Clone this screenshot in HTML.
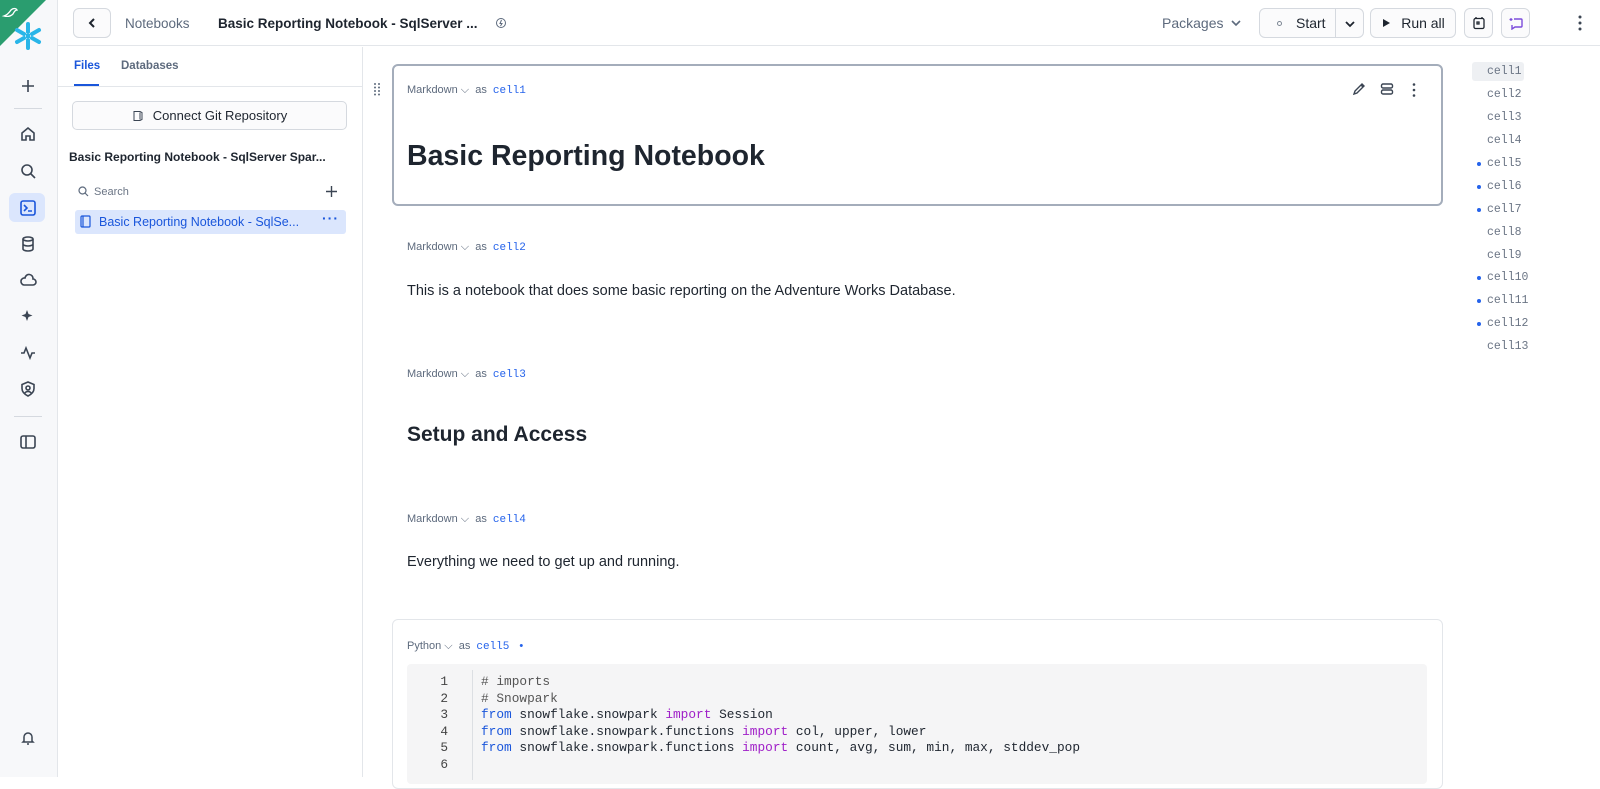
<!DOCTYPE html>
<html><head><meta charset="utf-8"><style>
*{box-sizing:border-box;margin:0;padding:0}
body{width:1600px;height:777px;overflow:hidden;background:#fff;font-family:"Liberation Sans",sans-serif;color:#1e252f;position:relative}
.abs{position:absolute}
.side{left:0;top:0;width:58px;height:777px;background:#f7f8fa;border-right:1px solid #e3e6ea}
.ic{position:absolute;left:18px;width:20px;height:20px}
.top{left:58px;top:0;right:0;height:46px;border-bottom:1px solid #e3e6ea}
.btn{position:absolute;border:1px solid #d5d9df;border-radius:6px;background:#fbfbfc;height:30px;top:8px;font-size:14px;display:flex;align-items:center;justify-content:center}
.lbl{font-size:11px;color:#5d6a7d;position:absolute}
.lbl .c{color:#2563eb;font-family:"Liberation Mono",monospace;margin-left:6px}
.toc{position:absolute;left:1487px;font-family:"Liberation Mono",monospace;font-size:11.5px;color:#6b7585}
.dot{position:absolute;left:1477px;width:4px;height:4px;border-radius:50%;background:#2563eb}
.code{font-family:"Liberation Mono",monospace;font-size:12.8px;line-height:16.5px}
.kw{color:#a020c8}
</style></head><body>
<div class="abs side">
  <svg class="abs" style="left:0;top:0" width="46" height="46"><polygon points="0,0 46,0 0,46" fill="#2a9d6f"/><path d="M4 16c3-1 5-3 7-6 2-2 5-2 6 0-2 0-3 2-4 4-2 2-5 3-9 2z" fill="none" stroke="#fff" stroke-width="1.3"/></svg>
  <svg class="abs" style="left:12px;top:20px" width="32" height="32" viewBox="0 0 32 32" stroke="#29b5e8" stroke-width="4" stroke-linecap="round" fill="none"><path d="M16 4v8M16 20v8M5 10l7 4M20 18l7 4M5 22l7-4M20 14l7-4"/><rect x="14" y="14" width="4" height="4" fill="#29b5e8" stroke="none"/></svg>
  <svg class="ic" style="top:76px" viewBox="0 0 20 20" stroke="#3b4553" stroke-width="1.6" fill="none"><path d="M10 4v12M4 10h12"/></svg>
  <div class="abs" style="left:14px;top:108px;width:28px;height:1px;background:#d5d9df"></div>
  <svg class="ic" style="top:124px" viewBox="0 0 20 20" stroke="#3b4553" stroke-width="1.6" fill="none"><path d="M4 9l6-5 6 5v7H12v-4H8v4H4z"/></svg>
  <svg class="ic" style="top:161px" viewBox="0 0 20 20" stroke="#3b4553" stroke-width="1.6" fill="none"><circle cx="9" cy="9" r="5"/><path d="M13 13l4 4"/></svg>
  <div class="abs" style="left:9px;top:193px;width:36px;height:29px;background:#dbe6fd;border-radius:6px"></div>
  <svg class="ic" style="top:198px" viewBox="0 0 20 20" stroke="#1a56db" stroke-width="1.6" fill="none"><rect x="3" y="3" width="14" height="14" rx="2"/><path d="M6 7l3 3-3 3M10 13h4"/></svg>
  <svg class="ic" style="top:234px" viewBox="0 0 20 20" stroke="#3b4553" stroke-width="1.6" fill="none"><ellipse cx="10" cy="5" rx="5" ry="2"/><path d="M5 5v10c0 1 2 2 5 2s5-1 5-2V5M5 10c0 1 2 2 5 2s5-1 5-2"/></svg>
  <svg class="ic" style="top:270px" viewBox="0 0 20 20" stroke="#3b4553" stroke-width="1.6" fill="none"><path d="M6 15h9a3 3 0 000-6 4 4 0 00-8-1 3.5 3.5 0 00-1 7z"/></svg>
  <svg class="ic" style="top:306px" viewBox="0 0 20 20" fill="#3b4553"><path d="M9 4l1.5 4 4 1.5-4 1.5L9 15l-1.5-4-4-1.5 4-1.5z"/></svg>
  <svg class="ic" style="top:343px" viewBox="0 0 20 20" stroke="#3b4553" stroke-width="1.6" fill="none"><path d="M3 10h3l2-5 4 10 2-5h3"/></svg>
  <svg class="ic" style="top:379px" viewBox="0 0 20 20" stroke="#3b4553" stroke-width="1.6" fill="none"><path d="M10 3l6 2.5v4c0 4-3 6-6 7.5-3-1.5-6-3.5-6-7.5v-4z"/><circle cx="10" cy="9" r="2"/><path d="M7 14c1-2 5-2 6 0"/></svg>
  <div class="abs" style="left:14px;top:416px;width:28px;height:1px;background:#d5d9df"></div>
  <svg class="ic" style="top:432px" viewBox="0 0 20 20" stroke="#3b4553" stroke-width="1.6" fill="none"><rect x="3" y="4" width="14" height="12" rx="2"/><path d="M8 4v12"/></svg>
  <svg class="ic" style="top:728px" viewBox="0 0 20 20" stroke="#3b4553" stroke-width="1.5" fill="none"><path d="M6 13V9a4 4 0 018 0v4l1 1H5zM9 16h2"/></svg>
</div>

<div class="abs top"></div>
<div class="btn" style="left:73px;width:38px"><svg width="12" height="12" viewBox="0 0 12 12" stroke="#1e252f" stroke-width="2" fill="none"><path d="M8 2L4 6l4 4"/></svg></div>
<div class="abs" style="left:125px;top:16px;font-size:13.5px;color:#5d6a7d">Notebooks</div>
<div class="abs" style="left:218px;top:16px;font-size:13.5px;font-weight:bold">Basic Reporting Notebook - SqlServer ...</div>
<svg class="abs" style="left:495px;top:17px" width="12" height="12" viewBox="0 0 12 12" stroke="#5d6a7d" fill="none"><circle cx="6" cy="6" r="4.5"/><path d="M6.5 3L5 6.5h2L5.5 9"/></svg>
<div class="abs" style="left:1162px;top:15px;font-size:14px;color:#5d6a7d">Packages</div>
<svg class="abs" style="left:1230px;top:17px" width="12" height="12" viewBox="0 0 12 12" stroke="#5d6a7d" stroke-width="1.6" fill="none"><path d="M2 4l4 4 4-4"/></svg>
<div class="btn" style="left:1259px;width:105px;justify-content:flex-start">
  <span style="margin-left:17px;width:5px;height:5px;border:1px solid #7d8794;border-radius:50%"></span>
  <span style="margin-left:14px">Start</span>
  <span style="position:absolute;left:75px;top:0;bottom:0;border-left:1px solid #d5d9df"></span>
  <svg style="position:absolute;left:84px;top:9px" width="12" height="12" viewBox="0 0 12 12" stroke="#1e252f" stroke-width="1.8" fill="none"><path d="M2 4l4 4 4-4"/></svg>
</div>
<div class="btn" style="left:1370px;width:86px"><svg width="10" height="10" viewBox="0 0 10 10"><path d="M2 1l7 4-7 4z" fill="#1e252f"/></svg><span style="margin-left:10px">Run all</span></div>
<div class="btn" style="left:1464px;width:29px"><svg width="14" height="14" viewBox="0 0 14 14" stroke="#1e252f" stroke-width="1.3" fill="none"><rect x="2" y="2.5" width="10" height="10" rx="1.5"/><path d="M4 1v2M10 1v2M5 6h2v2H5z"/></svg></div>
<div class="btn" style="left:1501px;width:29px"><svg width="16" height="14" viewBox="0 0 16 14" stroke="#7c4ddb" stroke-width="1.4" fill="none"><path d="M6 3h7a1 1 0 011 1v6a1 1 0 01-1 1H7l-3 2v-4"/><path d="M3 2v3M1.5 3.5h3" stroke-width="1.2"/></svg></div>
<svg class="abs" style="left:1577px;top:14px" width="6" height="18"><circle cx="3" cy="3" r="1.5" fill="#3b4553"/><circle cx="3" cy="9" r="1.5" fill="#3b4553"/><circle cx="3" cy="15" r="1.5" fill="#3b4553"/></svg>

<div class="abs" style="left:362px;top:47px;width:1px;height:730px;background:#e3e6ea"></div>
<div class="abs" style="left:74px;top:60px;font-size:11.5px;color:#1a56db;font-weight:bold">Files</div>
<div class="abs" style="left:74px;top:84px;width:25px;height:2px;background:#1a56db"></div>
<div class="abs" style="left:121px;top:60px;font-size:11.5px;color:#5d6a7d;font-weight:bold">Databases</div>
<div class="abs" style="left:58px;top:86px;width:304px;height:1px;background:#e3e6ea"></div>
<div class="abs" style="left:72px;top:101px;width:275px;height:29px;border:1px solid #d5d9df;border-radius:5px;background:#fbfbfc;display:flex;align-items:center;justify-content:center;font-size:13px">
  <svg width="12" height="12" viewBox="0 0 12 12" stroke="#3b4553" fill="none"><path d="M2 1.5h6l2 1v7l-2 1H2zM8 2.5v7"/></svg><span style="margin-left:9px">Connect Git Repository</span></div>
<div class="abs" style="left:69px;top:150px;font-size:12px;font-weight:bold">Basic Reporting Notebook - SqlServer Spar...</div>
<svg class="abs" style="left:78px;top:186px" width="11" height="11" viewBox="0 0 11 11" stroke="#5d6a7d" stroke-width="1.2" fill="none"><circle cx="4.5" cy="4.5" r="3.5"/><path d="M7 7l3 3"/></svg>
<div class="abs" style="left:94px;top:186px;font-size:11px;color:#6b7585">Search</div>
<svg class="abs" style="left:325px;top:185px" width="13" height="13" viewBox="0 0 13 13" stroke="#3b4553" stroke-width="1.4"><path d="M6.5 1v11M1 6.5h11"/></svg>
<div class="abs" style="left:75px;top:210px;width:271px;height:24px;background:#dbe6fd;border-radius:3px"></div>
<svg class="abs" style="left:80px;top:215px" width="11" height="13" viewBox="0 0 11 13" stroke="#1a56db" stroke-width="1.2" fill="none"><rect x="1" y="1" width="9" height="11" rx="1"/><path d="M3 1v11"/></svg>
<div class="abs" style="left:99px;top:215px;font-size:12.5px;color:#1a56db">Basic Reporting Notebook - SqlSe...</div>
<div class="abs" style="left:322px;top:210px;font-size:14px;color:#1a56db;font-weight:bold;letter-spacing:1px">···</div>

<svg class="abs" style="left:373px;top:82px" width="8" height="14"><g fill="#5d6a7d"><circle cx="2" cy="2" r="1"/><circle cx="6" cy="2" r="1"/><circle cx="2" cy="5.5" r="1"/><circle cx="6" cy="5.5" r="1"/><circle cx="2" cy="9" r="1"/><circle cx="6" cy="9" r="1"/><circle cx="2" cy="12.5" r="1"/><circle cx="6" cy="12.5" r="1"/></g></svg>
<div class="abs" style="left:392px;top:64px;width:1051px;height:142px;border:2px solid #a4adbb;border-radius:6px"></div>
<div class="lbl" style="left:407px;top:84px">Markdown ⌵ &nbsp;as<span class="c">cell1</span></div>
<svg class="abs" style="left:1352px;top:82px" width="14" height="14" viewBox="0 0 14 14" stroke="#3b4553" stroke-width="1.4" fill="none"><path d="M2 12l1-3 7-7 2 2-7 7zM9 3l2 2"/></svg>
<svg class="abs" style="left:1380px;top:82px" width="14" height="14" viewBox="0 0 14 14" stroke="#3b4553" stroke-width="1.4" fill="none"><rect x="1.5" y="2" width="11" height="4" rx="1.5"/><rect x="1.5" y="8" width="11" height="4" rx="1.5"/></svg>
<svg class="abs" style="left:1411px;top:82px" width="6" height="16"><g fill="#3b4553"><circle cx="3" cy="2.5" r="1.3"/><circle cx="3" cy="8" r="1.3"/><circle cx="3" cy="13.5" r="1.3"/></g></svg>
<div class="abs" style="left:407px;top:140px;font-size:28.5px;font-weight:bold">Basic Reporting Notebook</div>

<div class="lbl" style="left:407px;top:241px">Markdown ⌵ &nbsp;as<span class="c">cell2</span></div>
<div class="abs" style="left:407px;top:283px;font-size:14.5px">This is a notebook that does some basic reporting on the Adventure Works Database.</div>
<div class="lbl" style="left:407px;top:368px">Markdown ⌵ &nbsp;as<span class="c">cell3</span></div>
<div class="abs" style="left:407px;top:423px;font-size:21px;font-weight:bold">Setup and Access</div>
<div class="lbl" style="left:407px;top:513px">Markdown ⌵ &nbsp;as<span class="c">cell4</span></div>
<div class="abs" style="left:407px;top:554px;font-size:14.5px">Everything we need to get up and running.</div>

<div class="abs" style="left:392px;top:619px;width:1051px;height:170px;border:1px solid #e3e6ea;border-radius:6px"></div>
<div class="lbl" style="left:407px;top:640px">Python ⌵ &nbsp;as<span class="c">cell5</span><span style="color:#2563eb;margin-left:10px">•</span></div>
<div class="abs" style="left:407px;top:664px;width:1020px;height:120px;background:#f5f5f6;border-radius:4px"></div>
<div class="abs" style="left:472px;top:670px;width:1px;height:110px;background:#dcdfe3"></div>
<div class="abs code" style="left:434px;top:674px;width:14px;text-align:right;color:#444">1<br>2<br>3<br>4<br>5<br>6</div>
<div class="abs code" style="left:481px;top:674px;color:#1e252f;white-space:pre"><span style="color:#555"># imports</span>
<span style="color:#555"># Snowpark</span>
<span style="color:#1a56db">from</span> snowflake.snowpark <span class="kw">import</span> Session
<span style="color:#1a56db">from</span> snowflake.snowpark.functions <span class="kw">import</span> col, upper, lower
<span style="color:#1a56db">from</span> snowflake.snowpark.functions <span class="kw">import</span> count, avg, sum, min, max, stddev_pop</div>

<div class="abs" style="left:1472px;top:62px;width:52px;height:19px;background:#eef0f3;border-radius:3px"></div>
<div class="toc" style="top:65px">cell1</div>
<div class="toc" style="top:88px">cell2</div>
<div class="toc" style="top:111px">cell3</div>
<div class="toc" style="top:134px">cell4</div>
<div class="toc" style="top:157px">cell5</div><div class="dot" style="top:162px"></div>
<div class="toc" style="top:180px">cell6</div><div class="dot" style="top:185px"></div>
<div class="toc" style="top:203px">cell7</div><div class="dot" style="top:208px"></div>
<div class="toc" style="top:226px">cell8</div>
<div class="toc" style="top:249px">cell9</div>
<div class="toc" style="top:271px">cell10</div><div class="dot" style="top:276px"></div>
<div class="toc" style="top:294px">cell11</div><div class="dot" style="top:299px"></div>
<div class="toc" style="top:317px">cell12</div><div class="dot" style="top:322px"></div>
<div class="toc" style="top:340px">cell13</div>
</body></html>
